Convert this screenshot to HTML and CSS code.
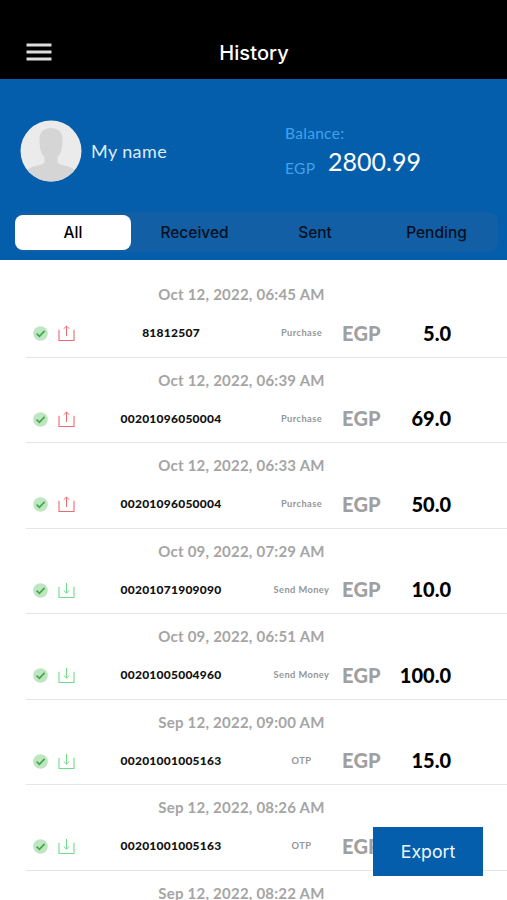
FILE: index.html
```html
<!DOCTYPE html>
<html lang="en">
<head>
<meta charset="utf-8">
<title>History</title>
<link rel="stylesheet" href="styles.css">
</head>
<body>
<svg class="defs" width="0" height="0">
  <symbol id="check" viewBox="0 0 15 15">
    <circle cx="7.5" cy="7.5" r="7.3" fill="#bfe6c1"/>
    <path d="M3.6 7.7 6.4 10.3 11.6 4.9" fill="none" stroke="#3daa4c" stroke-width="1.7"/>
  </symbol>
  <symbol id="out" viewBox="0 0 17 17">
    <path d="M1 4.700V15.500H16V4.700" fill="none" stroke="currentColor" stroke-width="1.100"/>
    <path d="M8.500 11V1.200M5.700 3.800 8.500 1 11.300 3.800" fill="none" stroke="currentColor" stroke-width="1"/>
  </symbol>
  <symbol id="in" viewBox="0 0 17 17">
    <path d="M1 4.700V15.500H16V4.700" fill="none" stroke="currentColor" stroke-width="1.100"/>
    <path d="M8.500 1V11M5.700 8.400 8.500 11.200 11.300 8.400" fill="none" stroke="currentColor" stroke-width="1"/>
  </symbol>
</svg>
<header class="bar">
  <svg class="menu" viewBox="0 0 26 20"><path d="M.5 3H25.500M.5 10H25.500M.5 17H25.500" stroke="#dedcdc" stroke-width="3"/></svg>
  <h1>History</h1>
</header>
<section class="account">
  <div class="profile">
    <svg class="avatar" viewBox="0 0 62 62">
      <clipPath id="round"><circle cx="31" cy="31" r="30.500"/></clipPath>
      <circle cx="31" cy="31" r="30.500" fill="#ebebeb"/>
      <path clip-path="url(#round)" fill="#d5d5d5" d="M31 8C38 8 43 12 42.500 20C42.500 28 41 34 37.500 37V42C38 46 52 45 55 51V62H7V51C10 45 24 46 24.500 42V37C21 34 19.500 28 19.500 20C19 12 24 8 31 8Z"/>
    </svg>
    <span class="name">My name</span>
    <div class="balance">
      <span class="label">Balance:</span>
      <div class="sum"><span class="unit">EGP</span><span class="total">2800.99</span></div>
    </div>
  </div>
  <nav class="tabs"><span class="tab active">All</span><span class="tab">Received</span><span class="tab">Sent</span><span class="tab last">Pending</span></nav>
</section>
<main class="list">
  <article class="item"><div class="date">Oct 12, 2022, 06:45 AM</div><div class="row"><svg class="check"><use href="#check"/></svg><svg class="dir out"><use href="#out"/></svg><span class="phone">81812507</span><span class="type">Purchase</span><span class="cur">EGP</span><span class="amount">5.0</span></div></article>
  <article class="item"><div class="date">Oct 12, 2022, 06:39 AM</div><div class="row"><svg class="check"><use href="#check"/></svg><svg class="dir out"><use href="#out"/></svg><span class="phone">00201096050004</span><span class="type">Purchase</span><span class="cur">EGP</span><span class="amount">69.0</span></div></article>
  <article class="item"><div class="date">Oct 12, 2022, 06:33 AM</div><div class="row"><svg class="check"><use href="#check"/></svg><svg class="dir out"><use href="#out"/></svg><span class="phone">00201096050004</span><span class="type">Purchase</span><span class="cur">EGP</span><span class="amount">50.0</span></div></article>
  <article class="item"><div class="date">Oct 09, 2022, 07:29 AM</div><div class="row"><svg class="check"><use href="#check"/></svg><svg class="dir in"><use href="#in"/></svg><span class="phone">00201071909090</span><span class="type">Send Money</span><span class="cur">EGP</span><span class="amount">10.0</span></div></article>
  <article class="item"><div class="date">Oct 09, 2022, 06:51 AM</div><div class="row"><svg class="check"><use href="#check"/></svg><svg class="dir in"><use href="#in"/></svg><span class="phone">00201005004960</span><span class="type">Send Money</span><span class="cur">EGP</span><span class="amount">100.0</span></div></article>
  <article class="item"><div class="date">Sep 12, 2022, 09:00 AM</div><div class="row"><svg class="check"><use href="#check"/></svg><svg class="dir in"><use href="#in"/></svg><span class="phone">00201001005163</span><span class="type">OTP</span><span class="cur">EGP</span><span class="amount">15.0</span></div></article>
  <article class="item"><div class="date">Sep 12, 2022, 08:26 AM</div><div class="row"><svg class="check"><use href="#check"/></svg><svg class="dir in"><use href="#in"/></svg><span class="phone">00201001005163</span><span class="type">OTP</span><span class="cur">EGP</span></div></article>
  <article class="item final"><div class="date">Sep 12, 2022, 08:22 AM</div></article>
</main>
<button class="export">Export</button>
</body>
</html>
```
FILE: styles.css
```css
* { box-sizing: border-box; }
body {
  margin: 0;
  height: 900px;
  overflow: hidden;
  display: flex;
  flex-direction: column;
  background: #fff;
  font-family: Lato, "Open Sans", sans-serif;
}
.defs { position: absolute; }
.bar {
  flex: none;
  height: 79px;
  padding: 25px 26px 0;
  background: #000;
  display: grid;
  grid-template-columns: 26px 1fr 26px;
  align-items: center;
}
.menu { width: 26px; height: 20px; }
h1 {
  margin: 0;
  padding: 1px 0 0 1px;
  text-align: center;
  color: #fff;
  font: 500 20px/24px Inter, sans-serif;
  letter-spacing: .1px;
}
.account {
  flex: none;
  height: 181px;
  background: #045eab;
  padding: 41px 9px 0 15px;
}
.profile { display: flex; align-items: center; height: 62px; padding-left: 5px; }
.avatar { width: 62px; height: 62px; flex: none; }
.name { color: #dcecfa; font-size: 18px; line-height: 24px; letter-spacing: .4px; margin: 0 0 1px 9px; width: 193px; }
.balance { color: #43a0ec; font-size: 15.500px; line-height: 20px; letter-spacing: .3px; padding: 2px 0 0 1px; }
.label { display: block; margin-top: -3px; }
.sum { display: flex; align-items: flex-end; height: 35px; }
.unit { line-height: 20px; width: 43px; }
.total { color: #fff; font-size: 25px; line-height: 34px; letter-spacing: 0; }
.tabs {
  margin-top: 30px;
  height: 40px;
  background: #125fa5;
  border-radius: 9px;
  display: grid;
  grid-template-columns: 116px 127px 114px 1fr;
  align-items: center;
}
.tab {
  height: 35px;
  line-height: 35px;
  text-align: center;
  color: #03101f;
  font-family: Inter, sans-serif;
  font-size: 15.500px;
  font-weight: 500;
}
.tab.last { padding-left: 3px; }
.tab.active { background: #fff; color: #000; border-radius: 8px; }
.list { flex: 1; min-height: 0; overflow: hidden; padding: 12px 0 0 26px; }
.item { height: 85.500px; border-bottom: 1px solid #e5e5e5; padding-top: 12px; }
.item.final { height: 42px; border: 0; }
.date {
  width: 431px;
  text-align: center;
  color: #a5a5a5;
  font-size: 15px;
  line-height: 20px;
  font-weight: 700;
  letter-spacing: .23px;
}
.row {
  display: grid;
  grid-template-columns: 15px 17px 172px 65px 37px 62px;
  column-gap: 10px;
  align-items: center;
  height: 24px;
  margin-top: 16.500px;
  padding-left: 7px;
}
.row span { padding-bottom: 2px; }
.check { width: 15px; height: 15px; }
.dir { width: 17px; height: 17px; }
.out { color: #ec6971; }
.in { color: #72dc8b; }
.phone { text-align: center; font-size: 12px; font-weight: 900; color: #111; letter-spacing: .25px; }
.row .type { padding-left: 4px; text-align: center; font-size: 9.300px; font-weight: 700; color: #969696; letter-spacing: .4px; white-space: nowrap; }
.cur { font-size: 20px; font-weight: 900; color: #a0a0a0; letter-spacing: .2px; }
.amount { font-size: 20px; font-weight: 900; color: #000; text-align: right; }
.export {
  position: absolute;
  left: 373px;
  top: 827px;
  width: 110px;
  height: 49px;
  border: 0;
  background: #045eab;
  color: #eef6ff;
  font: 400 17.700px/24px Inter, sans-serif;
}
```
